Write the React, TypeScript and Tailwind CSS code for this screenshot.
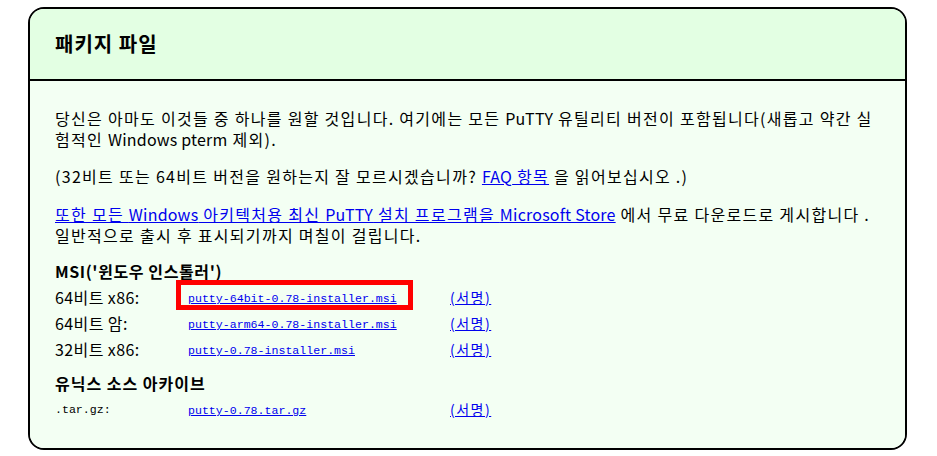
import React from "react";

const body = { fontFamily: '"Noto Sans CJK KR", "Noto Sans", sans-serif' };
const mono = { fontFamily: '"Liberation Mono", "Noto Sans CJK KR", monospace' };

function L({ children }: { children: React.ReactNode }) {
  return <span className="tracking-[0.2px]">{children}</span>;
}

function Row({ label, file, monoLabel, boxed }: { label: string; file: string; monoLabel?: boolean; boxed?: boolean }) {
  return (
    <div className="flex h-[26px] items-center">
      <div
        className={monoLabel ? "w-[133px] text-[11.6px]" : "w-[133px] text-[16px] tracking-[0.4px]"}
        style={monoLabel ? mono : body}
      >
        {label}
      </div>
      <div className="relative w-[262px]">
        <a href="#" className="text-[11.6px] text-[#0000ee] underline" style={mono}>
          {file}
        </a>
        {boxed && (
          <div className="absolute left-[-12px] top-[-5px] h-[30px] w-[237px] border-[5px] border-[#ff0000]" />
        )}
      </div>
      <a href="#" className="text-[14px] tracking-[1.5px] text-[#0000ee] underline" style={body}>
        (서명)
      </a>
    </div>
  );
}

export default function App() {
  return (
    <div className="h-[456px] w-[937px] bg-white pt-[7px] text-black" style={body}>
      <div className="ml-[28px] h-[443px] w-[879px] overflow-hidden rounded-[16px] border-2 border-black">
        <div className="flex h-[72px] items-center border-b-2 border-black bg-[#e3ffe3] pl-[25px]">
          <h2 className="text-[20px] font-bold tracking-[1px]">패키지 파일</h2>
        </div>
        <div className="h-full bg-[#f3fff3] pl-[25px] pr-[8px] pt-[27px] text-[16px] leading-[21px] tracking-[1.3px]">
          <p>
            당신은 아마도 이것들 중 하나를 원할 것입니다. 여기에는 모든 <L>PuTTY</L> 유틸리티 버전이 포함됩니다(새롭고 약간 실
            <br />
            험적인 <L>Windows pterm</L> 제외).
          </p>
          <p className="mt-[16px]">
            (32비트 또는 64비트 버전을 원하는지 잘 모르시겠습니까?{" "}
            <a href="#" className="text-[#0000ee] underline">
              <L>FAQ</L> 항목
            </a>{" "}
            을 읽어보십시오 .)
          </p>
          <p className="mt-[17px]">
            <a href="#" className="text-[#0000ee] underline">
              또한 모든 <L>Windows</L> 아키텍처용 최신 <L>PuTTY</L> 설치 프로그램을 <L>Microsoft Store</L>
            </a>{" "}
            에서 무료 다운로드로 게시합니다 .
            <br />
            일반적으로 출시 후 표시되기까지 며칠이 걸립니다.
          </p>
          <h3 className="mt-[15px] font-bold tracking-[0.6px]">MSI('윈도우 인스톨러')</h3>
          <div className="mt-[2px] tracking-normal">
            <Row label="64비트 x86:" file="putty-64bit-0.78-installer.msi" boxed />
            <Row label="64비트 암:" file="putty-arm64-0.78-installer.msi" />
            <Row label="32비트 x86:" file="putty-0.78-installer.msi" />
          </div>
          <h3 className="mt-[11px] font-bold tracking-[1px]">유닉스 소스 아카이브</h3>
          <div className="mt-[2px] tracking-normal">
            <Row label=".tar.gz:" file="putty-0.78.tar.gz" monoLabel />
          </div>
        </div>
      </div>
    </div>
  );
}
